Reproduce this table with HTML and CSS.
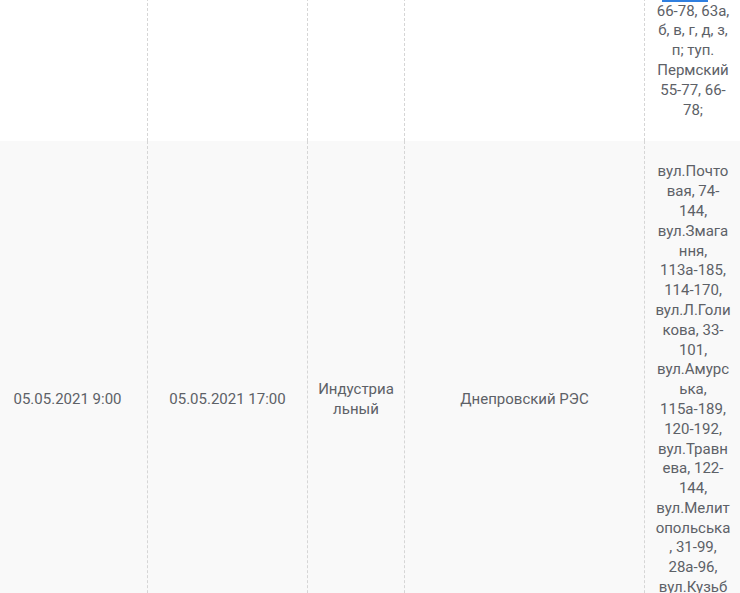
FILE: index.html
```html
<!DOCTYPE html>
<html lang="ru">
<head>
<meta charset="utf-8">
<title>Отключения</title>
<link rel="stylesheet" href="styles.css">
</head>
<body>
<div class="page">
  <span class="focus-bar"></span>
  <table class="outages">
    <colgroup>
      <col class="c-start">
      <col class="c-end">
      <col class="c-district">
      <col class="c-res">
      <col class="c-addr">
    </colgroup>
    <tbody>
      <tr class="row">
        <td class="cell">05.05.2021 9:00</td>
        <td class="cell">05.05.2021 17:00</td>
        <td class="cell">Индустриа<br>льный</td>
        <td class="cell">Днепровский РЭС</td>
        <td class="cell addr">вул.Ново<br>кодацька,<br>1-45, 2-<br>38,<br>вул.Пермс<br>ька, 1-53,<br>2-64,<br>вул.Бахму<br>тська, 55-<br>77, 66-78,<br>вул.Сибір<br>ська, 55-77,<br>66-78, 63а,<br>б, в, г, д, з,<br>п; туп.<br>Пермский<br>55-77, 66-<br>78;</td>
      </tr>
      <tr class="row row-alt">
        <td class="cell">05.05.2021 9:00</td>
        <td class="cell">05.05.2021 17:00</td>
        <td class="cell">Индустриа<br>льный</td>
        <td class="cell">Днепровский РЭС</td>
        <td class="cell addr">вул.Почто<br>вая, 74-<br>144,<br>вул.Змага<br>ння,<br>113а-185,<br>114-170,<br>вул.Л.Голи<br>кова, 33-<br>101,<br>вул.Амурс<br>ька,<br>115а-189,<br>120-192,<br>вул.Травн<br>ева, 122-<br>144,<br>вул.Мелит<br>опольська<br>, 31-99,<br>28а-96,<br>вул.Кузьб<br>аська, 1-<br>55, 2-60;</td>
      </tr>
    </tbody>
  </table>
</div>
</body>
</html>
```
FILE: styles.css
```css
html, body {
  margin: 0;
  padding: 0;
  overflow: hidden;
  background: #ffffff;
}

.page {
  position: relative;
  width: 740px;
  height: 593px;
  overflow: hidden;
}

.focus-bar {
  position: absolute;
  left: 662px;
  top: 0;
  width: 46px;
  height: 2px;
  background: #2f7fe0;
}

.outages {
  border-collapse: separate;
  border-spacing: 0;
  table-layout: fixed;
  width: 753px;
  margin-left: -12px;
  margin-top: -257px;
  font-family: Roboto, "Noto Sans", sans-serif;
  font-size: 15px;
  line-height: 19.8px;
  color: #5d6167;
}

.c-start { width: 160px; }
.c-end { width: 160px; }
.c-district { width: 97px; }
.c-res { width: 240px; }
.c-addr { width: 96px; }

.cell {
  box-sizing: border-box;
  padding: 21px 6px;
  text-align: center;
  vertical-align: middle;
  white-space: nowrap;
  border-right: 1px dashed #d6d6d6;
}

.cell.addr {
  border-right: none;
}

.row-alt .cell {
  background: #f9f9f9;
}
```
